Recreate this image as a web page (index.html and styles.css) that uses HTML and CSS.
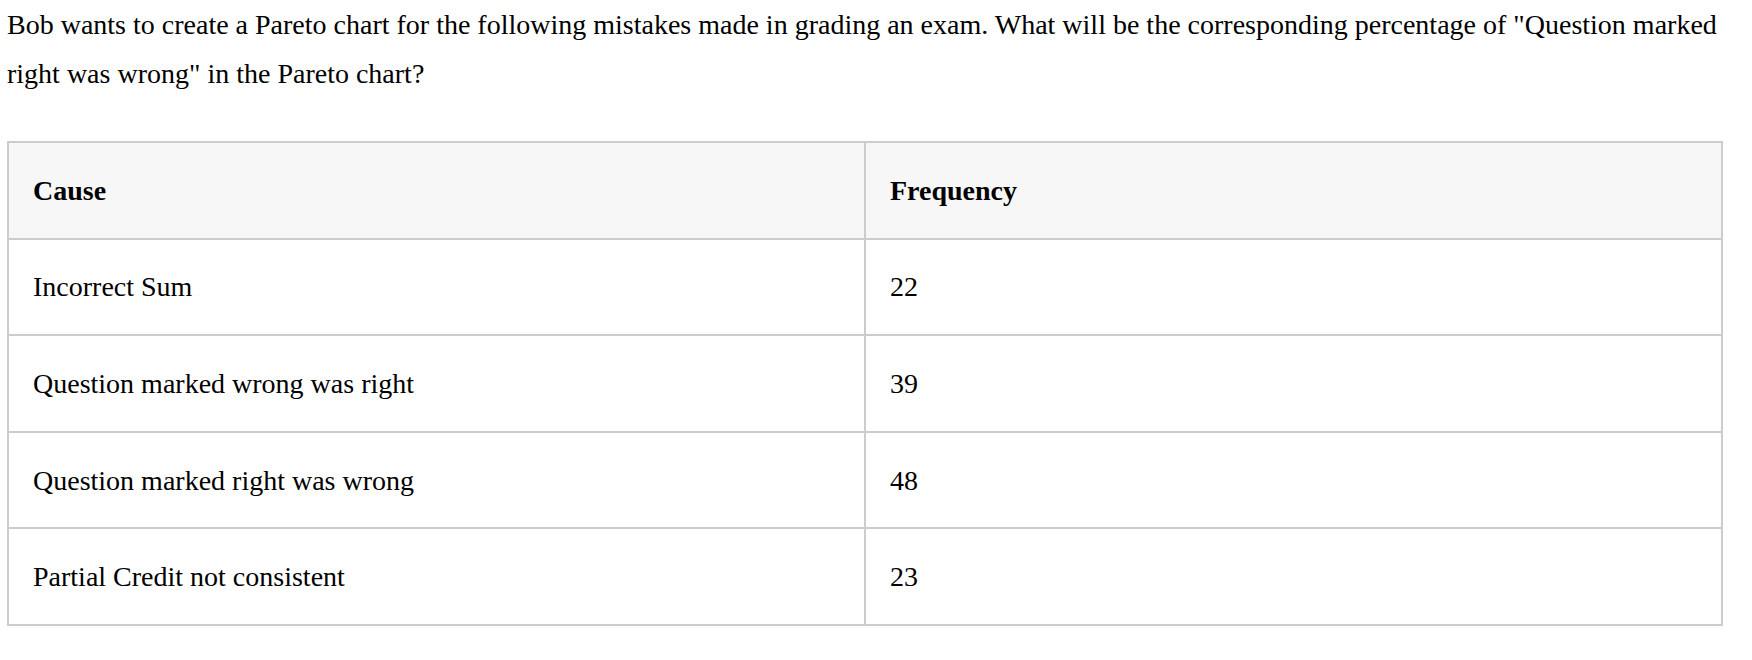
FILE: index.html
```html
<!DOCTYPE html>
<html>
<head>
<meta charset="utf-8">
<link rel="stylesheet" href="styles.css">
</head>
<body>
<div class="question">
<p class="prompt">Bob wants to create a Pareto chart for the following mistakes made in grading an exam. What will be the corresponding percentage of "Question marked right was wrong" in the Pareto chart?</p>
<table class="data">
<thead>
<tr><th>Cause</th><th>Frequency</th></tr>
</thead>
<tbody>
<tr><td>Incorrect Sum</td><td>22</td></tr>
<tr><td>Question marked wrong was right</td><td>39</td></tr>
<tr><td>Question marked right was wrong</td><td>48</td></tr>
<tr><td>Partial Credit not consistent</td><td>23</td></tr>
</tbody>
</table>
</div>
</body>
</html>
```
FILE: styles.css
```css
html, body {
  margin: 0;
  padding: 0;
  background: #fff;
}
.question {
  width: 1716px;
  margin-left: 7px;
  font-family: "Liberation Serif", "Times New Roman", serif;
  font-size: 28px;
  color: #000;
}
.prompt {
  margin: 0 0 43px 0;
  line-height: 49px;
}
.data {
  width: 100%;
  border-collapse: collapse;
  table-layout: fixed;
}
.data th, .data td {
  border: 2px solid #cccccc;
  padding: 22.8px 24px;
  text-align: left;
  line-height: 49px;
}
.data th {
  background: #f7f7f7;
  font-weight: bold;
}
```
